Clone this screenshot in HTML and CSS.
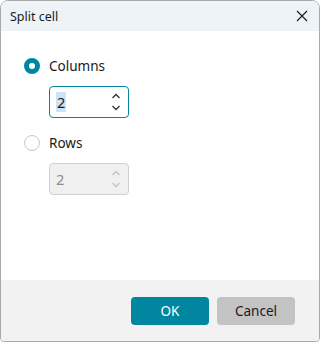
FILE: index.html
```html
<!DOCTYPE html>
<html>
<head>
<meta charset="utf-8">
<link rel="stylesheet" href="styles.css">
</head>
<body>
<div class="window">
  <div class="titlebar">
    <span class="title">Split cell</span>
    <svg class="close" width="12" height="12" viewBox="0 0 12 12"><path d="M1 1L11 11M11 1L1 11" stroke="#1a1a1a" stroke-width="1.1" fill="none"/></svg>
  </div>
  <div class="content">
    <div class="option">
      <span class="radio checked"></span>
      <span class="label">Columns</span>
    </div>
    <div class="spin active">
      <span class="value"><span class="sel">2</span></span>
      <svg class="arrows" width="10" height="22" viewBox="0 0 10 22"><path d="M1.5 7L5 3.5L8.5 7M1.5 15L5 18.5L8.5 15" stroke="#333" stroke-width="1.3" fill="none"/></svg>
    </div>
    <div class="option">
      <span class="radio"></span>
      <span class="label">Rows</span>
    </div>
    <div class="spin disabled">
      <span class="value">2</span>
      <svg class="arrows" width="10" height="22" viewBox="0 0 10 22"><path d="M1.5 7L5 3.5L8.5 7M1.5 15L5 18.5L8.5 15" stroke="#c4c4c4" stroke-width="1.3" fill="none"/></svg>
    </div>
  </div>
  <div class="footer">
    <button class="btn ok">OK</button>
    <button class="btn cancel">Cancel</button>
  </div>
</div>
</body>
</html>
```
FILE: styles.css
```css
html, body { margin: 0; padding: 0; }
body {
  width: 320px;
  height: 342px;
  font-family: "Segoe UI", "Noto Sans", "Open Sans", sans-serif;
  background: #fff;
  overflow: hidden;
}
.window {
  box-sizing: border-box;
  width: 320px;
  height: 342px;
  border: 1px solid #a9a9a9;
  border-radius: 8px 8px 4px 4px;
  overflow: hidden;
  display: flex;
  flex-direction: column;
  background: #fff;
}
.titlebar {
  height: 30px;
  background: #eef3f8;
  display: flex;
  align-items: center;
  justify-content: space-between;
  padding: 0 11px 0 9px;
  flex: none;
}
.title { font-size: 12.5px; color: #1a1a1a; }
.close { display: block; margin-top: -1px; }
.content {
  flex: 1;
  padding: 26px 0 0 23px;
}
.option {
  display: flex;
  align-items: center;
  gap: 9px;
  height: 18px;
}
.radio {
  box-sizing: border-box;
  width: 16px;
  height: 16px;
  border-radius: 50%;
  border: 1px solid #c8c8c8;
  background: #fff;
}
.radio.checked {
  border: 5px solid #00879f;
  background: #fff;
}
.label { font-size: 13.5px; color: #1a1a1a; }
.spin {
  box-sizing: border-box;
  width: 80px;
  height: 32px;
  margin: 11px 0 16px 25px;
  border-radius: 4px;
  display: flex;
  align-items: center;
  justify-content: space-between;
  padding: 0 7px 0 6px;
}
.spin.active { border: 1px solid #00879f; background: #fff; }
.spin.disabled { border: 1px solid #cfcfcf; background: #f0f0f0; color: #8a8a8a; }
.value { font-size: 14.5px; color: #1a1a1a; line-height: 19px; }
.spin.disabled .value { color: #8c8c8c; }
.sel { background: #cce4f7; padding: 0 1px; }
.arrows { display: block; }
.footer {
  height: 61px;
  flex: none;
  background: #f2f2f2;
  display: flex;
  align-items: center;
  justify-content: flex-end;
  gap: 8px;
  padding-right: 24px;
}
.btn {
  width: 78px;
  height: 28px;
  border: none;
  border-radius: 4px;
  font-family: inherit;
  font-size: 13.5px;
  padding: 0;
}
.ok { background: #00879f; color: #fff; }
.cancel { background: #c3c3c3; color: #1a1a1a; }
```
